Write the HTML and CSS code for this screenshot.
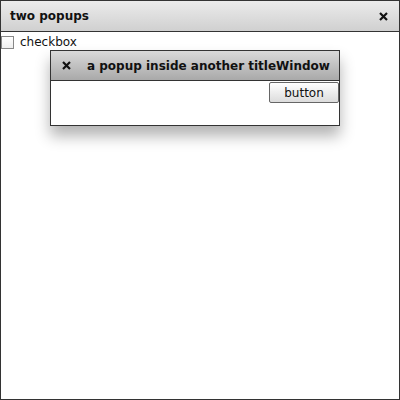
FILE: index.html
```html
<!DOCTYPE html>
<html>
<head>
<meta charset="utf-8">
<link rel="stylesheet" href="styles.css">
</head>
<body>
<div class="window">
  <div class="titlebar">
    <span class="title">two popups</span>
    <svg class="close" width="9" height="9" viewBox="0 0 9 9"><path d="M1 1L8 8M8 1L1 8" stroke="#111" stroke-width="2.2"/></svg>
  </div>
  <div class="content">
    <label class="check"><span class="box"></span>checkbox</label>
    <div class="popup">
      <div class="ptitlebar">
        <svg class="pclose" width="9" height="9" viewBox="0 0 9 9"><path d="M1 1L8 8M8 1L1 8" stroke="#111" stroke-width="2.2"/></svg>
        <span class="ptitle">a popup inside another titleWindow</span>
      </div>
      <div class="pcontent">
        <button class="btn">button</button>
      </div>
    </div>
  </div>
</div>
</body>
</html>
```
FILE: styles.css
```css
html, body { margin: 0; padding: 0; }
body { width: 400px; height: 400px; font-family: "DejaVu Sans", sans-serif; background: #fff; }
.window { box-sizing: border-box; width: 400px; height: 400px; border: 1px solid #333; display: flex; flex-direction: column; }
.titlebar { height: 30px; flex: none; border-bottom: 1px solid #333; background: linear-gradient(#ebebeb, #d0d0d0); display: flex; align-items: center; justify-content: space-between; padding: 0 11px 0 9px; }
.title { font-weight: bold; font-size: 12px; color: #111; }
.close { display: block; }
.content { position: relative; flex: 1; }
.check { display: flex; align-items: center; font-size: 12px; color: #111; margin-top: 3px; height: 14px; }
.box { width: 11px; height: 11px; border: 1px solid #888; background: linear-gradient(#fff, #eee); margin-right: 6px; }
.popup { position: absolute; left: 49px; top: 18px; width: 288px; height: 74px; border: 1px solid #333; background: #fff; box-shadow: 0 10px 14px rgba(0,0,0,0.3); display: flex; flex-direction: column; }
.ptitlebar { height: 29px; flex: none; border-bottom: 1px solid #333; background: linear-gradient(#d9d9d9, #a9a9a9); display: flex; align-items: center; padding-left: 11px; white-space: nowrap; }
.pclose { display: block; margin-right: 16px; }
.ptitle { font-weight: bold; font-size: 12px; color: #111; }
.pcontent { display: flex; justify-content: flex-end; padding: 1px 0 0 0; }
.btn { font-family: "DejaVu Sans", sans-serif; font-size: 12px; color: #111; width: 70px; height: 21px; padding: 0; border: 1px solid #666; border-radius: 2px; background: linear-gradient(#fff, #dcdcdc); }
```
